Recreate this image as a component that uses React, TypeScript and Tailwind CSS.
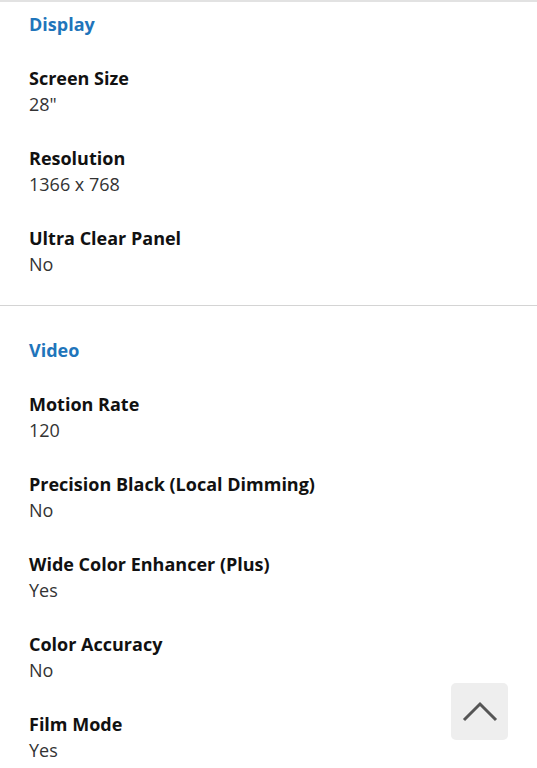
const sections = [
  {
    title: "Display",
    items: [
      ["Screen Size", '28"'],
      ["Resolution", "1366 x 768"],
      ["Ultra Clear Panel", "No"],
    ],
  },
  {
    title: "Video",
    items: [
      ["Motion Rate", "120"],
      ["Precision Black (Local Dimming)", "No"],
      ["Wide Color Enhancer (Plus)", "Yes"],
      ["Color Accuracy", "No"],
      ["Film Mode", "Yes"],
    ],
  },
];

export default function App() {
  return (
    <div className="relative h-[768px] overflow-hidden bg-white font-['Open_Sans',sans-serif] border-t-2 border-[#e2e2e2]">
      {sections.map((s, i) => (
        <div
          key={s.title}
          className={
            i === 0
              ? "px-[29px] pt-[9px] pb-[28px] border-b border-[#d4d4d4]"
              : "px-[29px] pt-[31px] pb-[27px]"
          }
        >
          <h2 className="text-[18px] leading-[26px] font-bold text-[#1f75bb]">{s.title}</h2>
          <div className="mt-[28px] flex flex-col gap-[28px]">
            {s.items.map(([label, value]) => (
              <div key={label}>
                <div className="text-[18px] leading-[26px] font-bold text-[#111]">{label}</div>
                <div className="text-[18px] leading-[26px] text-[#333]">{value}</div>
              </div>
            ))}
          </div>
        </div>
      ))}
      <button className="absolute left-[451px] top-[681px] w-[57px] h-[57px] rounded-[5px] bg-[#eeeeee] flex items-center justify-center">
        <svg width="36" height="22" viewBox="0 0 36 22" fill="none">
          <path d="M2 19 L18 3 L34 19" stroke="#555" strokeWidth="3" />
        </svg>
      </button>
    </div>
  );
}
